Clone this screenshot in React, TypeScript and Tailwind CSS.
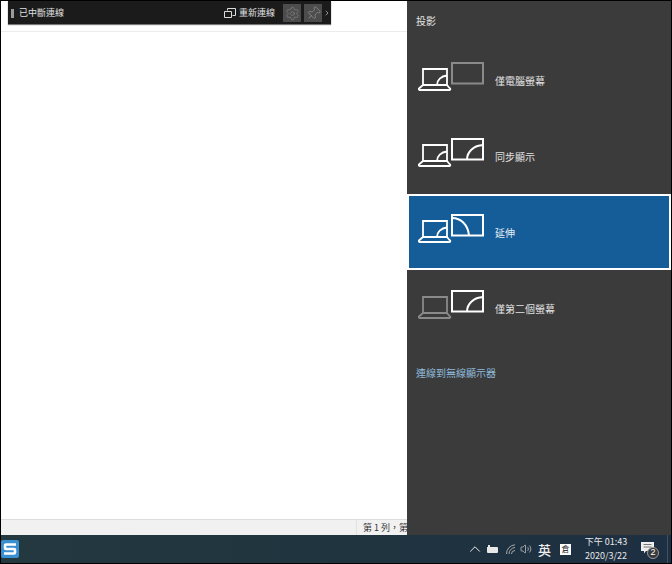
import { Settings, Pin, ChevronRight, ChevronUp, Volume2 } from 'lucide-react';

const cjk = { fontFamily: '"Noto Sans CJK TC", "Liberation Sans", sans-serif' };

// laptop + second screen glyph, arc position tells which mode it is
function ProjectIcon({ mode }: { mode: 'pc' | 'dup' | 'ext' | 'second' }) {
  const laptop = mode === 'second' ? '#8a8a8a' : '#ffffff';
  const screen = mode === 'pc' ? '#8a8a8a' : '#ffffff';
  return (
    <svg width="68" height="29" viewBox="0 0 68 29" fill="none" className="mb-[8px] shrink-0">
      <g stroke={laptop} strokeWidth="1.800">
        <path d="M5 7h24v16H5z" />
        <path d="M5 23 1.500 26a1 1 0 0 0 .5 2h29a1 1 0 0 0 .5-2L29 23" strokeLinejoin="round" />
        {mode !== 'second' && <path d="M19 23c0-5 4-9 10-9.500" />}
      </g>
      <g stroke={screen} strokeWidth="2">
        <path d="M34 1h31v20.500H34z" />
        {(mode === 'dup' || mode === 'second') && <path d="M49 21.500c0-8 7-14 16-14.500" />}
        {mode === 'ext' && <path d="M34 4c9 0 16 7 17 17.500" />}
      </g>
    </svg>
  );
}

function ProjectRow({ mode, label, selected }: { mode: 'pc' | 'dup' | 'ext' | 'second'; label: string; selected?: boolean }) {
  return (
    <div
      className={`flex h-[76px] items-center gap-[9px] pl-[9px] border-2 ${
        selected ? 'border-white bg-[#155d98]' : 'border-transparent'
      }`}
    >
      <ProjectIcon mode={mode} />
      <span className={`text-[10px] ${selected ? 'text-[#e4edf4]' : 'text-[#e2e2e2]'}`}>{label}</span>
    </div>
  );
}

export default function App() {
  return (
    <div className="flex h-[564px] w-[672px] flex-col overflow-hidden border border-black bg-white" style={cjk}>
      <div className="flex min-h-0 flex-1">
        {/* Document window */}
        <div className="relative flex min-w-0 flex-1 flex-col bg-white">
          <div className="absolute left-[7px] top-0 flex h-[23px] w-[323px] items-center bg-[#1b1b1b] pl-[2px] pt-[1px] text-[9px] text-[#e0e0e0] shadow-[0_1px_1px_#777]">
            <span className="ml-[1px] h-[9px] w-[3px] bg-[#9a9a9a]" />
            <span className="ml-[5px]">已中斷連線</span>
            <svg width="12" height="11" viewBox="0 0 12 11" fill="none" stroke="#dddddd" strokeWidth="1" className="ml-auto">
              <path d="M3.500 2.500V.5h8v7h-3M.5 3.500h7v6h-7z" />
            </svg>
            <span className="ml-[3px] mr-[8px]">重新連線</span>
            <span className="flex h-[18px] w-[18px] items-center justify-center bg-[#4c4c4c]">
              <Settings size={15} strokeWidth={1} color="#8c8c8c" />
            </span>
            <span className="ml-[3px] flex h-[18px] w-[18px] items-center justify-center bg-[#4c4c4c]">
              <Pin size={15} strokeWidth={1} color="#a0a0a0" className="rotate-45" />
            </span>
            <ChevronRight size={8} color="#cccccc" className="ml-[1px]" />
          </div>
          <div className="mt-[30px] h-[1px] bg-[#ececec]" />
          <div className="flex-1" />
          <div className="flex h-[16px] items-center justify-end border-t border-[#dcdcdc] bg-[#f1f1f1] text-[9px] text-[#333333]">
            <div className="flex h-full w-[51px] items-center overflow-hidden whitespace-nowrap border-l border-[#e2e2e2] pl-[6px]">
              第 1 列，第
            </div>
          </div>
        </div>

        {/* Project panel */}
        <div className="flex w-[264px] shrink-0 flex-col bg-[#3b3b3b]">
          <div className="pl-[9px] pt-[13px] text-[10px] leading-[14px] text-[#e6e6e6]">投影</div>
          <div className="mt-[14px] flex flex-col">
            <ProjectRow mode="pc" label="僅電腦螢幕" />
            <ProjectRow mode="dup" label="同步顯示" />
            <ProjectRow mode="ext" label="延伸" selected />
            <ProjectRow mode="second" label="僅第二個螢幕" />
          </div>
          <div className="mt-[20px] pl-[9px] text-[10px] leading-[14px] text-[#8fbbdc]">連線到無線顯示器</div>
        </div>
      </div>

      {/* Taskbar */}
      <div className="flex h-[28px] shrink-0 items-center bg-gradient-to-r from-[#23383f] via-[#20343f] to-[#1d2f42] text-[#eeeeee]">
        <svg width="18" height="18" viewBox="0 0 18 18" className="shrink-0">
          <rect width="18" height="18" rx="2" fill="#3a8fd0" />
          <path d="M15 4.500H5a1 1 0 0 0-1 1V8a1 1 0 0 0 1 1h8a1 1 0 0 1 1 1v2.500a1 1 0 0 1-1 1H3" fill="none" stroke="#ffffff" strokeWidth="2.600" />
        </svg>
        <div className="ml-auto flex h-full items-center">
          <ChevronUp size={18} strokeWidth={1.3} />
          <svg width="11" height="9" viewBox="0 0 11 9" className="ml-[3px]" fill="#e8e8e8">
            <path d="M0 2h1V0h2v2h7a1 1 0 0 1 1 1v4a1 1 0 0 1-1 1H1a1 1 0 0 1-1-1z" />
          </svg>
          {/* wifi: fan of arcs, greyed out */}
          <svg width="10" height="10" viewBox="0 0 10 10" fill="none" stroke="#a8a8a8" strokeWidth="1" className="ml-[8px]">
            <path d="M.5 10A9 9 0 0 1 9 .8M3 10a6.500 6.500 0 0 1 6-6.500M5.500 10A3.500 3.500 0 0 1 9 6.500" />
          </svg>
          <Volume2 size={12} strokeWidth={1.2} className="ml-[4px]" />
          <span className="ml-[6px] text-[13px] font-medium leading-none">英</span>
          <span className="ml-[9px] flex h-[11px] w-[11px] items-center justify-center bg-white text-[8px] leading-none text-[#333333]">倉</span>
          <div className="ml-[12px] flex w-[46px] flex-col items-center whitespace-nowrap text-[9px] leading-[14px] text-[#e8e8e8]">
            <span>下午 01:43</span>
            <span>2020/3/22</span>
          </div>
          <div className="relative ml-[12px] mb-[3px] h-[12px] w-[13px]">
            <svg width="13" height="12" viewBox="0 0 13 12">
              <path d="M0 0h13v9H5l-2 2.500V9H0z" fill="#eeeeee" />
              <path d="M2.500 2.500h8M2.500 5h8" stroke="#777777" strokeWidth="1" />
            </svg>
            <span className="absolute -bottom-[5px] -right-[5px] flex h-[12px] w-[12px] items-center justify-center rounded-full border border-[#999999] bg-[#3a3a3a] text-[9px] leading-none text-white" style={{ fontFamily: '"Liberation Sans", sans-serif' }}>
              2
            </span>
          </div>
          {/* show desktop sliver */}
          <div className="ml-[13px] mr-[3px] h-full w-[1px] bg-[#3f5264]" />
        </div>
      </div>
    </div>
  );
}
